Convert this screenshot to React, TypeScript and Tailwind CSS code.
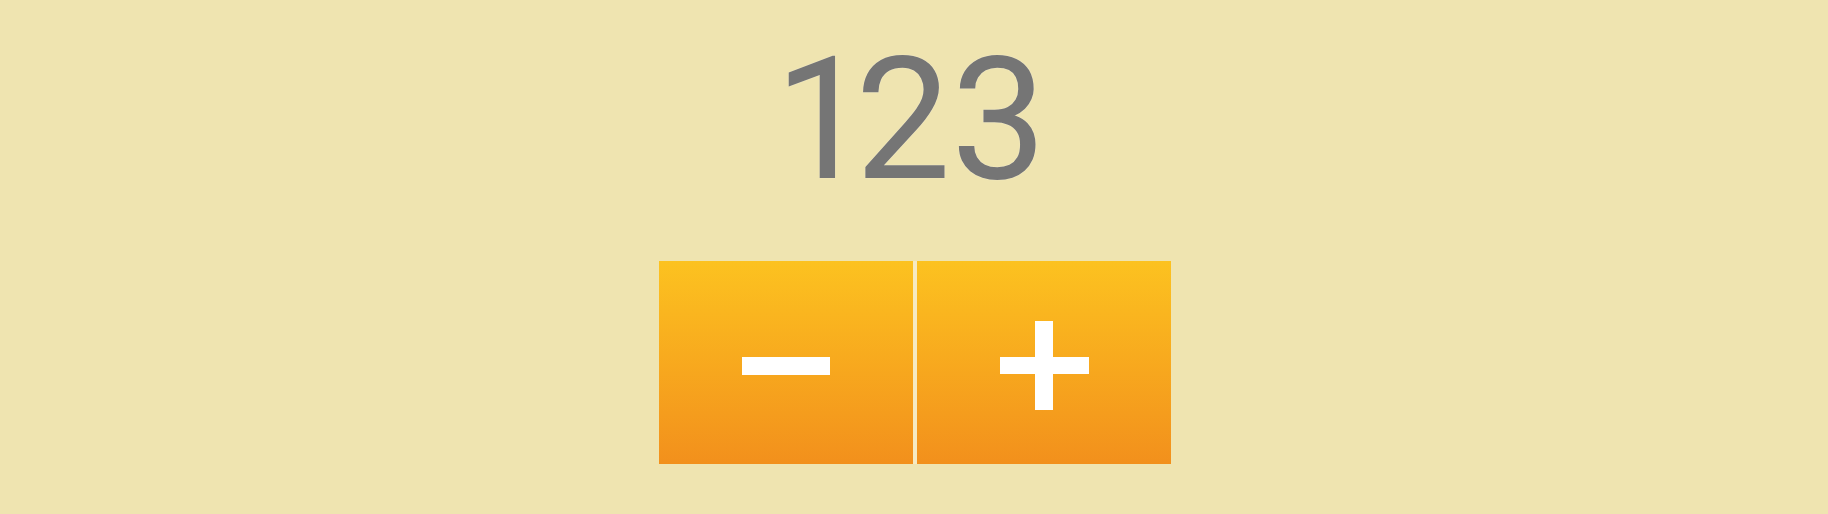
import React, { useState } from 'react';

const App = () => {
  const [count, setCount] = useState(123);

  return (
    <main className="w-full h-[514px] bg-[#efe4b0] flex flex-col items-center pt-[20px]">
      <h1
        className="text-[170px] font-normal text-[#757575] leading-[200px] proportional-nums"
        style={{ fontFamily: 'Roboto, "Liberation Sans", sans-serif', textShadow: '0 0 1px rgba(255,255,255,0.7)' }}
      >
        {count}
      </h1>

      <div className="mt-[41px] ml-[2px] flex gap-[4px] bg-[#f6eac2]">
        <button
          aria-label="−"
          onClick={() => setCount((c) => c - 1)}
          className="w-[254px] h-[203px] bg-gradient-to-b from-[#fcc220] to-[#f2901c] flex items-center justify-center pt-[6px]"
        >
          <span className="block w-[88px] h-[18px] bg-white" />
        </button>
        <button
          aria-label="+"
          onClick={() => setCount((c) => c + 1)}
          className="w-[254px] h-[203px] bg-gradient-to-b from-[#fcc220] to-[#f2901c] flex items-center justify-center pt-[6px]"
        >
          <span className="relative block w-[89px] h-[89px]">
            <span className="absolute left-0 top-[36px] w-[89px] h-[17px] bg-white" />
            <span className="absolute left-[35px] top-0 w-[18px] h-[89px] bg-white" />
          </span>
        </button>
      </div>
    </main>
  );
};

export default App;
